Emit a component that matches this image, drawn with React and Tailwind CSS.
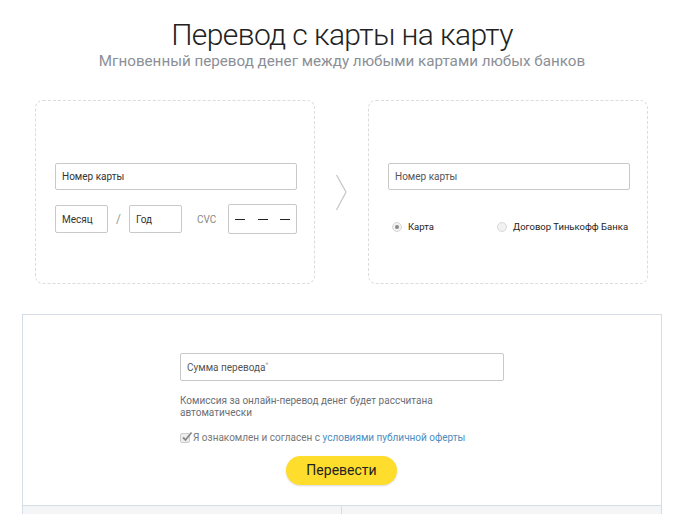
import React from "react";

const Field = ({ text, className = "" }) => (
  <div
    className={`flex items-center border border-[#c9c9c9] rounded-[2px] bg-white px-[6px] text-[10px] text-[#333] ${className}`}
  >
    {text}
  </div>
);

const Radio = ({ checked, label }) => (
  <div className="flex items-center gap-[6px] text-[9.5px] text-[#222]">
    <span className="w-[10px] h-[10px] rounded-full border border-[#d8d8d8] bg-[#f2f2f2] flex items-center justify-center">
      {checked && <span className="w-[4px] h-[4px] rounded-full bg-[#8a8a8a]" />}
    </span>
    {label}
  </div>
);

const App = () => {
  return (
    <div className="w-[697px] h-[514px] overflow-hidden bg-white font-['Roboto',sans-serif]">
      <div className="w-[684px]">
        <h1 className="text-center text-[30px] leading-[36px] font-light text-[#222] pt-[17px] tracking-[-0.6px]">
          Перевод с карты на карту
        </h1>
        <p className="text-center text-[15.2px] leading-[18px] text-[#8b8f96] mt-[-1px]">
          Мгновенный перевод денег между любыми картами любых банков
        </p>
      </div>

      <div className="flex items-center ml-[35px] mt-[30px]">
        <div className="w-[280px] h-[184px] border border-dashed border-[#dcdcdc] rounded-[8px] pl-[19px] pt-[62px]">
          <Field text="Номер карты" className="w-[242px] h-[27px]" />
          <div className="flex items-center mt-[14px]">
            <Field text="Месяц" className="w-[53px] h-[28px] items-start pt-[6px]" />
            <span className="w-[21px] text-center text-[12px] text-[#999]">/</span>
            <Field text="Год" className="w-[53px] h-[28px] items-start pt-[6px]" />
            <span className="ml-[15px] text-[10px] text-[#888]">CVC</span>
            <div className="ml-[12px] w-[69px] h-[30px] border border-[#c9c9c9] rounded-[2px] flex items-center justify-between px-[6px]">
              <span className="w-[10px] h-[1px] bg-[#222]" />
              <span className="w-[10px] h-[1px] bg-[#222]" />
              <span className="w-[10px] h-[1px] bg-[#222]" />
            </div>
          </div>
        </div>

        <div className="w-[53px] flex justify-center">
          <svg width="14" height="37" viewBox="0 0 14 37" fill="none">
            <path d="M1.5 1 L11 18 L1.5 36" stroke="#c4c4c4" strokeWidth="1.2" />
          </svg>
        </div>

        <div className="w-[280px] h-[184px] border border-dashed border-[#dcdcdc] rounded-[8px] pl-[19px] pt-[62px]">
          <Field text="Номер карты" className="w-[242px] h-[27px] text-[#555]" />
          <div className="flex items-center mt-[30px] pl-[4px]">
            <div className="w-[105px]">
              <Radio checked label="Карта" />
            </div>
            <Radio label="Договор Тинькофф Банка" />
          </div>
        </div>
      </div>

      <div className="ml-[22px] mt-[30px] w-[640px] border border-[#d5dde7]">
        <div className="pl-[157px] pt-[38px] pb-[20px]">
          <Field text={<span>Сумма перевода<sup className="text-[#aaa] text-[7px]">*</sup></span>} className="w-[324px] h-[28px] text-[#555]" />
          <p className="mt-[14px] w-[280px] text-[10px] leading-[12px] text-[#6b6f76]">
            Комиссия за онлайн-перевод денег будет рассчитана автоматически
          </p>
          <div className="flex items-center mt-[11px] text-[10px] text-[#777]">
            <span className="w-[10px] h-[10px] border border-[#ccc] bg-[#eee] rounded-[2px] relative mr-[3px]">
              <svg className="absolute left-[0px] top-[-3px]" width="12" height="12" viewBox="0 0 12 12" fill="none">
                <path d="M2 6.5 L4.5 9 L10.5 1.5" stroke="#8a8a8a" strokeWidth="1.8" />
              </svg>
            </span>
            Я ознакомлен и согласен с&nbsp;
            <span className="text-[#4d8dc0]">условиями публичной оферты</span>
          </div>
          <div className="ml-[106px] mt-[11px] w-[111px] h-[29px] rounded-full bg-[#ffdd2d] shadow-[0_1px_2px_rgba(0,0,0,0.15)] flex items-center justify-center text-[14px] text-[#222]">
            Перевести
          </div>
        </div>
        <div className="grid grid-cols-2 h-[20px] bg-[#f4f5f6] border-t border-[#d5dde7]">
          <div className="border-r border-[#d5dde7]" />
          <div />
        </div>
      </div>
    </div>
  );
};

export default App;
